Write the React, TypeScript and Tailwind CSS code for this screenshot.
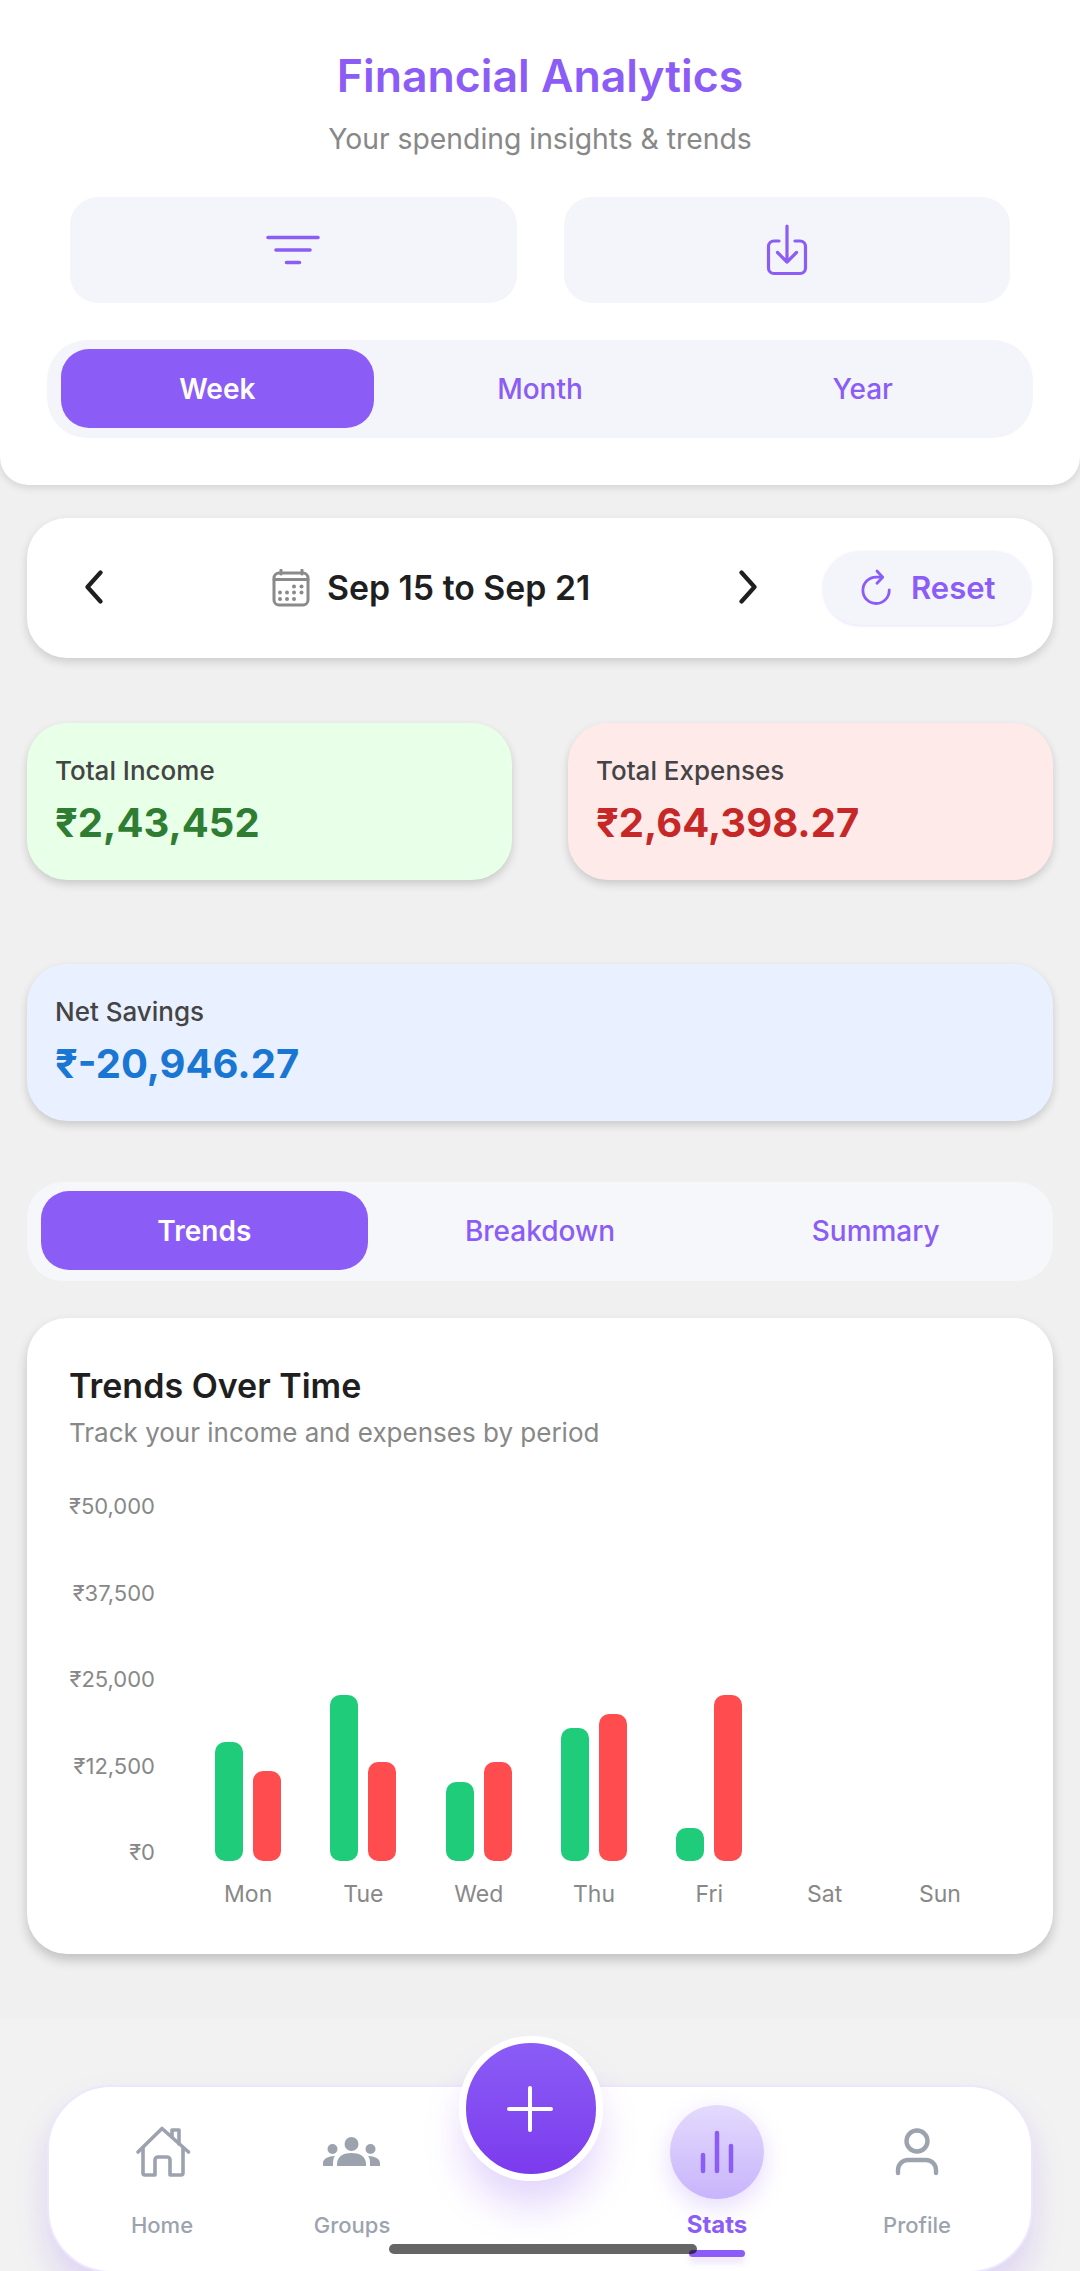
const days = [
  { label: "Mon", income: 119, expense: 90 },
  { label: "Tue", income: 166, expense: 99 },
  { label: "Wed", income: 79, expense: 99 },
  { label: "Thu", income: 133, expense: 147 },
  { label: "Fri", income: 33, expense: 166 },
  { label: "Sat", income: 0, expense: 0 },
  { label: "Sun", income: 0, expense: 0 },
];

const yLabels = ["₹50,000", "₹37,500", "₹25,000", "₹12,500", "₹0"];

function Chevron({ dir }: { dir: "left" | "right" }) {
  return (
    <svg width="20" height="34" viewBox="0 0 20 34" fill="none" stroke="#1f1f1f" strokeWidth="4.2" strokeLinecap="round" strokeLinejoin="round" className="shrink-0">
      <path d={dir === "left" ? "M16.5 2.5 L3.5 17 L16.5 31.5" : "M3.5 2.5 L16.5 17 L3.5 31.5"} />
    </svg>
  );
}

function StatCard({ label, value, bg, color, className }: { label: string; value: string; bg: string; color: string; className: string }) {
  return (
    <div className={`h-[157px] rounded-[40px] pl-[28px] pt-[31px] shadow-[0_4px_8px_rgba(0,0,0,0.16)] ${bg} ${className}`}>
      <div className="text-[26px] leading-[34px] font-medium text-[#444444]">{label}</div>
      <div className={`mt-[10px] text-[40px] leading-[50px] font-bold ${color}`}>{value}</div>
    </div>
  );
}

export default function App() {
  return (
    <div className="relative h-[2271px] w-[1080px] overflow-hidden bg-[#f0f0f0] [font-family:Inter,sans-serif]">
      {/* header */}
      <div className="h-[485px] rounded-b-[28px] bg-white pt-[52px] shadow-[0_2px_8px_rgba(0,0,0,0.14)]">
        <div className="text-center text-[44.6px] leading-[48px] font-semibold text-[#8b5cf6]">Financial Analytics</div>
        <div className="mt-[22px] text-center text-[28.3px] leading-[34px] text-[#888888]">Your spending insights &amp; trends</div>
        <div className="mt-[41px] flex gap-[47px] px-[70px]">
          <button className="flex h-[106px] flex-1 items-center justify-center rounded-[28px] bg-[#f4f5fa]">
            <svg width="54" height="30" viewBox="0 0 54 30" fill="none" stroke="#8b5cf6" strokeWidth="3.6" strokeLinecap="round">
              <path d="M2 2.5 H52 M10 15 H44 M20.5 27.5 H33.5" />
            </svg>
          </button>
          <button className="flex h-[106px] flex-1 items-center justify-center rounded-[28px] bg-[#f4f5fa]">
            <svg width="42" height="52" viewBox="0 0 42 52" fill="none" stroke="#8b5cf6" strokeWidth="3.2" strokeLinecap="round" strokeLinejoin="round">
              <path d="M21 2 V38 M11.5 28.5 L21 38 L30.5 28.5" />
              <path d="M13 17 H8 a5.5 5.5 0 0 0 -5.5 5.5 V44 a5.5 5.5 0 0 0 5.5 5.5 H34 a5.5 5.5 0 0 0 5.5 -5.5 V22.5 a5.5 5.5 0 0 0 -5.5 -5.5 H29" />
            </svg>
          </button>
        </div>
        <div className="mx-[47px] mt-[37px] flex h-[98px] items-start gap-[10px] rounded-[40px] bg-[#f4f5fa] px-[14px] pt-[9px]">
          <div className="flex h-[79px] flex-1 items-center justify-center rounded-[28px] bg-[#8b5cf6] text-[28px] font-semibold text-white">Week</div>
          <div className="flex h-[79px] flex-1 items-center justify-center text-[28px] font-medium text-[#8b5cf6]">Month</div>
          <div className="flex h-[79px] flex-1 items-center justify-center text-[28px] font-medium text-[#8b5cf6]">Year</div>
        </div>
      </div>

      {/* date range */}
      <div className="mx-[27px] mt-[33px] flex h-[140px] items-center rounded-[40px] bg-white shadow-[0_4px_10px_rgba(0,0,0,0.15)]">
        <div className="ml-[57px] -mt-[3px]"><Chevron dir="left" /></div>
        <svg width="38" height="38" viewBox="0 0 38 38" fill="none" className="ml-[168px] shrink-0">
          <rect x="2" y="4" width="34" height="32" rx="5" stroke="#8a8a8a" strokeWidth="3" />
          <path d="M2 10.5 H36 M9 1 V5 M30 1 V5" stroke="#8a8a8a" strokeWidth="3" strokeLinecap="round" />
          <g fill="#8a8a8a">
            <circle cx="22" cy="17.5" r="2" /><circle cx="29.5" cy="17.5" r="2" />
            <circle cx="8" cy="23.5" r="2" /><circle cx="15" cy="23.5" r="2" /><circle cx="22" cy="23.5" r="2" /><circle cx="29.5" cy="23.5" r="2" />
            <circle cx="8" cy="30" r="2" /><circle cx="15" cy="30" r="2" /><circle cx="22" cy="30" r="2" />
          </g>
        </svg>
        <div className="ml-[17px] mt-[1px] w-[264px] text-[33.8px] font-semibold whitespace-nowrap text-[#1f1f1f]">Sep 15 to Sep 21</div>
        <div className="ml-[147px] -mt-[3px]"><Chevron dir="right" /></div>
        <div className="ml-[65px] flex h-[74px] w-[208px] items-center rounded-full bg-[#f4f4fb] pl-[38px] shadow-[0_1px_3px_rgba(139,92,246,0.18)]">
          <svg width="32" height="40" viewBox="0 0 34 42" fill="none" stroke="#8b5cf6" strokeWidth="3" strokeLinecap="round" strokeLinejoin="round" className="shrink-0">
            <path d="M30 23 A14 14 0 1 1 16 9.5 H22.5" />
            <path d="M17 3 L23 9.5 L17 16" />
          </svg>
          <span className="ml-[18px] text-[31px] font-semibold text-[#8b5cf6]">Reset</span>
        </div>
      </div>

      {/* totals */}
      <div className="mx-[27px] mt-[65px] flex gap-[56px]">
        <StatCard label="Total Income" value="₹2,43,452" bg="bg-[#e8ffe8]" color="text-[#2e7d32]" className="flex-1" />
        <StatCard label="Total Expenses" value="₹2,64,398.27" bg="bg-[#ffeaea]" color="text-[#c62828]" className="flex-1" />
      </div>
      <div className="mx-[27px] mt-[84px]">
        <StatCard label="Net Savings" value="₹-20,946.27" bg="bg-[#e9f0ff]" color="text-[#1976d2]" className="w-full" />
      </div>

      {/* tabs */}
      <div className="mx-[27px] mt-[61px] flex h-[99px] items-start gap-[9px] rounded-[36px] bg-[#f6f7fb] px-[14px] pt-[9px]">
        <div className="flex h-[79px] flex-1 items-center justify-center rounded-[28px] bg-[#8b5cf6] text-[28px] font-semibold text-white">Trends</div>
        <div className="flex h-[79px] flex-1 items-center justify-center text-[28px] font-medium text-[#8b5cf6]">Breakdown</div>
        <div className="flex h-[79px] flex-1 items-center justify-center text-[28px] font-medium text-[#8b5cf6]">Summary</div>
      </div>

      {/* chart */}
      <div className="mx-[27px] mt-[37px] h-[636px] rounded-[40px] bg-white pt-[47px] pl-[42px] shadow-[0_6px_12px_rgba(0,0,0,0.2)]">
        <div className="text-[34px] leading-[42px] font-semibold text-[#1f1f1f]">Trends Over Time</div>
        <div className="mt-[9px] text-[26px] leading-[34px] text-[#888888]">Track your income and expenses by period</div>
        <div className="mt-[43px] flex">
          <div className="flex h-[372px] w-[86px] shrink-0 flex-col items-end justify-between text-[22px] leading-[26px] text-[#888888]">
            {yLabels.map((l) => (
              <div key={l}>{l}</div>
            ))}
          </div>
          <div className="ml-[35.5px] flex">
            {days.map((d) => (
              <div key={d.label} className="flex w-[115.3px] flex-col items-center">
                <div className="flex h-[372px] items-end gap-[10px] pb-[4px]">
                  {d.income > 0 && <div className="w-[28px] rounded-[10px] bg-[#1fcc7a]" style={{ height: d.income }} />}
                  {d.expense > 0 && <div className="w-[28px] rounded-[10px] bg-[#ff4d4f]" style={{ height: d.expense }} />}
                </div>
                <div className="mt-[16px] text-[23px] leading-[26px] text-[#888888]">{d.label}</div>
              </div>
            ))}
          </div>
        </div>
      </div>

      {/* bottom nav */}
      <div className="relative mt-[64px] h-[253px] bg-[#f2f2f2] pt-[67px]">
        <div className="mx-[47px] flex h-[188px] items-start rounded-[64px] border-2 border-[#ece7fc] bg-white pt-[18px] shadow-[0_18px_32px_rgba(139,92,246,0.2)]">
          <div className="ml-[63px] flex w-[100px] flex-col items-center">
            <div className="flex h-[94px] items-center">
              <svg width="60" height="56" viewBox="0 0 60 56" fill="none" stroke="#9ca3af" strokeWidth="3.6" strokeLinecap="round" strokeLinejoin="round">
                <path d="M6 28 L30 4.5 L56.5 28" />
                <path d="M11 24 V49 a2 2 0 0 0 2 2 H23 V36 a3 3 0 0 1 3 -3 h9 a3 3 0 0 1 3 3 V51 H49 a2 2 0 0 0 2 -2 V24" />
                <path d="M40 13 V6 H47 V20" />
              </svg>
            </div>
            <div className="mt-[12px] text-[22px] leading-[28px] font-medium text-[#9ca3af]">Home</div>
          </div>
          <div className="ml-[90px] flex w-[100px] flex-col items-center">
            <div className="flex h-[94px] items-center">
              <svg width="58" height="30" viewBox="0 0 58 30" fill="#9ca3af">
                <circle cx="28.5" cy="7" r="7" />
                <circle cx="9.5" cy="12" r="5" />
                <circle cx="47.5" cy="12" r="5" />
                <path d="M14 29 V27 C14 19 21 16 28.5 16 S43 19 43 27 V29 Z" />
                <path d="M0 29 V26 C0 22 5 19 12 19 C10 21 10 24 10 29 Z" />
                <path d="M57 29 V26 C57 22 52 19 45 19 C47 21 47 24 47 29 Z" />
              </svg>
            </div>
            <div className="mt-[12px] text-[22px] leading-[28px] font-medium text-[#9ca3af]">Groups</div>
          </div>
          <div className="ml-[265px] flex w-[100px] flex-col items-center">
            <div className="flex h-[94px] w-[94px] items-center justify-center rounded-full bg-gradient-to-b from-[#e4dafd] to-[#c8b4fb] shadow-[0_8px_24px_rgba(139,92,246,0.22)]">
              <svg width="40" height="44" viewBox="0 0 40 44" fill="none" stroke="#8b5cf6" strokeWidth="4.5" strokeLinecap="round">
                <path d="M6 25 V41 M20 3 V41 M34 16 V41" />
              </svg>
            </div>
            <div className="mt-[12px] text-[24px] leading-[28px] font-bold text-[#8b5cf6]">Stats</div>
            <div className="mt-[11px] h-[7px] w-[56px] rounded-full bg-[#8b5cf6] shadow-[0_6px_6px_rgba(139,92,246,0.16)]" />
          </div>
          <div className="ml-[100px] flex w-[100px] flex-col items-center">
            <div className="flex h-[94px] items-center">
              <svg width="44" height="50" viewBox="0 0 44 50" fill="none" stroke="#9ca3af" strokeWidth="4.4" strokeLinecap="round">
                <circle cx="22" cy="14" r="10.5" />
                <path d="M3 46 V43 a10 10 0 0 1 10 -10 H31 a10 10 0 0 1 10 10 V46" />
              </svg>
            </div>
            <div className="mt-[12px] text-[22px] leading-[28px] font-medium text-[#9ca3af]">Profile</div>
          </div>
        </div>

        <div className="absolute top-[18px] left-[459px] flex h-[145px] w-[144px] items-center justify-center rounded-full border-[7px] border-white bg-gradient-to-b from-[#8b5cf6] to-[#7c3aed] shadow-[0_28px_40px_-4px_rgba(124,58,237,0.22)]">
          <svg width="46" height="46" viewBox="0 0 46 46" fill="none" stroke="#ffffff" strokeWidth="4" strokeLinecap="round" className="-ml-[3px]">
            <path d="M23 2 V44 M2 23 H44" />
          </svg>
        </div>
        <div className="absolute top-[226px] left-[389px] h-[10px] w-[308px] rounded-full bg-black/60" />
      </div>
    </div>
  );
}
